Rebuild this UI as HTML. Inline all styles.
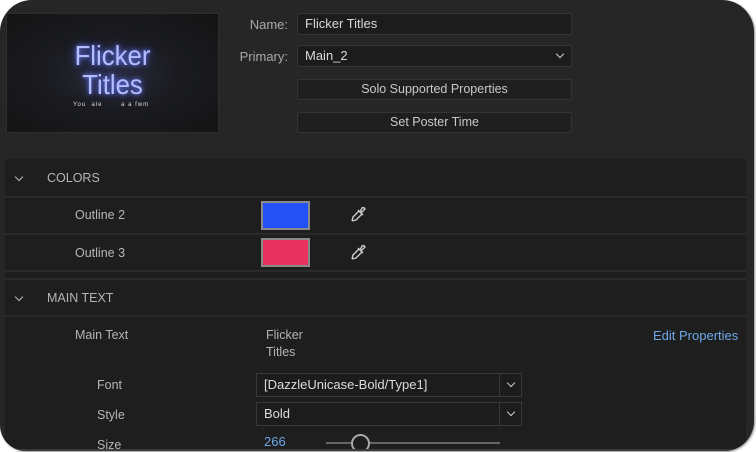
<!DOCTYPE html>
<html><head><meta charset="utf-8"><style>
*{margin:0;padding:0;box-sizing:border-box}
body{width:756px;height:452px;background:#fff;overflow:hidden;font-family:"Liberation Sans",sans-serif;font-size:12.5px;color:#b8b8b8;position:relative}
.panel{position:absolute;left:0;top:0;width:754px;height:451px;background:#262626;border-radius:32px 32px 30px 26px;overflow:hidden;box-shadow:1px 1px 2px #888}
.abs{position:absolute}
.thumb{left:6px;top:13px;width:213px;height:120px;background:radial-gradient(ellipse at 50% 50%,#2a2d3a 0%,#1a1b20 45%,#141414 100%);border:1px solid #2e2e2e}
.ft{position:absolute;width:100%;text-align:center;font-weight:normal;color:#b3bdff;text-shadow:0 0 5px #6a7cff,0 0 10px #4450c0;font-size:28px;line-height:30px;transform:scaleX(0.92)}
.lbl{color:#a8a8a8;text-align:right;width:80px;font-size:13px}
.fld{background:#1c1c1c;border:1px solid #333;height:22px;color:#d8d8d8;font-size:13px;line-height:20px;padding-left:7px;border-radius:2px}
.btn{background:#1f1f1f;border:1px solid #343434;height:21px;color:#c8c8c8;font-size:12.5px;line-height:19px;text-align:center;border-radius:2px}
.sec{left:5px;width:741px;background:#1e1e1e}
.line{left:5px;width:741px;height:2px;background:#2a2a2a}
.chev{width:6px;height:6px;border-right:1.4px solid #bbb;border-bottom:1.4px solid #bbb;transform:rotate(45deg)}
.cap{color:#b5b5b5;font-size:12.5px}
.sw{width:49px;height:29px;border:2px solid #8a8a8a}
.dd{border:1px solid #383838;background:#1c1c1c;height:24px;color:#dcdcdc;font-size:13px;line-height:22px;padding-left:7px}
.ddb{position:absolute;right:0;top:0;width:22px;height:22px;border-left:1px solid #383838}
.ddb i{position:absolute;left:8px;top:6px;width:6px;height:6px;border-right:1.3px solid #ccc;border-bottom:1.3px solid #ccc;transform:rotate(45deg)}
</style></head><body>
<div class="panel">
 <div class="abs thumb">
  <div class="ft" style="top:27px">Flicker</div>
  <div class="ft" style="top:56px">Titles</div>
  <div class="abs" style="top:88px;left:66px;font-size:6px;color:#ddd;letter-spacing:1px">You&nbsp;&nbsp;ale&nbsp;&nbsp;&nbsp;&nbsp;&nbsp;&nbsp;&nbsp;a a fwm</div>
 </div>
 <div class="abs lbl" style="left:208px;top:17px">Name:</div>
 <div class="abs fld" style="left:297px;top:13px;width:275px">Flicker Titles</div>
 <div class="abs lbl" style="left:208px;top:49px">Primary:</div>
 <div class="abs fld" style="left:297px;top:45px;width:275px">Main_2<div class="abs" style="right:8px;top:5px;width:6px;height:6px;border-right:1.3px solid #ccc;border-bottom:1.3px solid #ccc;transform:rotate(45deg)"></div></div>
 <div class="abs btn" style="left:297px;top:79px;width:275px">Solo Supported Properties</div>
 <div class="abs btn" style="left:297px;top:112px;width:275px">Set Poster Time</div>

 <div class="abs sec" style="top:159px;height:300px"></div>
 <div class="abs chev" style="left:16px;top:174px"></div>
 <div class="abs cap" style="left:47px;top:171px">COLORS</div>
 <div class="abs line" style="top:196px"></div>
 <div class="abs cap" style="left:75px;top:208px">Outline 2</div>
 <div class="abs sw" style="left:261px;top:201px;background:#2451f5"></div>
 <svg class="abs" style="left:348px;top:205px" width="20" height="20" viewBox="0 0 20 20"><path d="M4 16 L5 12 L11 6 M4 16 L8 15 L14 9 M10 5 L15 10 M12 7 L14 3 Q16 2 17 4 L13 8" fill="none" stroke="#ccc" stroke-width="1.4"/></svg>
 <div class="abs line" style="top:233px"></div>
 <div class="abs cap" style="left:75px;top:246px">Outline 3</div>
 <div class="abs sw" style="left:261px;top:238px;background:#e8325f"></div>
 <svg class="abs" style="left:348px;top:243px" width="20" height="20" viewBox="0 0 20 20"><path d="M4 16 L5 12 L11 6 M4 16 L8 15 L14 9 M10 5 L15 10 M12 7 L14 3 Q16 2 17 4 L13 8" fill="none" stroke="#ccc" stroke-width="1.4"/></svg>
 <div class="abs line" style="top:270px"></div>
 <div class="abs line" style="top:278px"></div>
 <div class="abs chev" style="left:16px;top:294px"></div>
 <div class="abs cap" style="left:47px;top:291px">MAIN TEXT</div>
 <div class="abs line" style="top:315px"></div>
 <div class="abs cap" style="left:75px;top:328px">Main Text</div>
 <div class="abs cap" style="left:266px;top:327px;line-height:17px">Flicker<br>Titles</div>
 <div class="abs" style="left:653px;top:328px;color:#6ea8e8;font-size:13px">Edit Properties</div>
 <div class="abs cap" style="left:97px;top:378px">Font</div>
 <div class="abs dd" style="left:256px;top:373px;width:266px">[DazzleUnicase-Bold/Type1]<div class="ddb"><i></i></div></div>
 <div class="abs cap" style="left:97px;top:408px">Style</div>
 <div class="abs dd" style="left:256px;top:402px;width:266px">Bold<div class="ddb"><i></i></div></div>
 <div class="abs cap" style="left:97px;top:438px">Size</div>
 <div class="abs" style="left:264px;top:434px;color:#6ea8e8;font-size:13px">266</div>
 <div class="abs" style="left:326px;top:442px;width:174px;height:2px;background:#666"></div>
 <div class="abs" style="left:351px;top:434px;width:19px;height:19px;border-radius:50%;border:2px solid #aaa;background:#1e1e1e"></div>
 <div class="abs" style="left:5px;top:449px;width:741px;height:3px;background:#3a3a3a"></div>
</div>
</body></html>
